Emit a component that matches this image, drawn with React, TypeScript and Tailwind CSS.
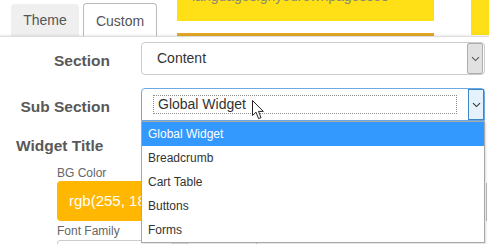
import React from "react";

const font = "font-['Liberation_Sans',Arial,sans-serif]";

function Chevron({ color = "#555" }: { color?: string }) {
  return (
    <svg width="9" height="6" viewBox="0 0 9 6">
      <path d="M1 1.2 L4.5 4.6 L8 1.2" fill="none" stroke={color} strokeWidth="1.1" />
    </svg>
  );
}

function Cursor() {
  return (
    <svg width="13" height="20" viewBox="0 0 13 20" className="absolute left-[252px] top-[100px]">
      <path
        d="M0.5 0.5 L0.5 15.5 L4 12.2 L6.6 18.6 L9 17.6 L6.5 11.4 L11.3 11.4 Z"
        fill="#fff"
        stroke="#222"
        strokeWidth="1"
        strokeLinejoin="round"
      />
    </svg>
  );
}

const items = ["Global Widget", "Breadcrumb", "Cart Table", "Buttons", "Forms"];

export default function App() {
  return (
    <div className={`${font} relative w-[489px] h-[244px] overflow-hidden bg-white`}>
      {/* tab bar */}
      <div className="flex h-[36px] items-end">
        <div className="ml-[11px] flex h-[32px] w-[68px] items-center justify-center rounded-t-[4px] bg-[#efefef] text-[14px] text-[#555]">
          Theme
        </div>
        <div className="ml-[4px] flex h-[33px] w-[74px] items-center justify-center rounded-t-[4px] border border-b-0 border-[#bbb] bg-white pt-[2px] text-[14px] text-[#555]">
          Custom
        </div>
        <div className="ml-[20px] flex h-[36px] w-[257px] flex-col self-start">
          <div className="h-[21px] overflow-hidden bg-[#ffdf16] pl-[15px]">
            <div className="-mt-[12px] text-[14px] leading-[16px] text-[#8a8a70]">languagesignyourownpagesses</div>
          </div>
          <div className="flex-1" />
          <div className="h-[3px] bg-[#e3a925]" />
        </div>
        <div className="ml-[37px] h-[35px] w-[18px] self-start bg-[#ffdf16]" />
      </div>

      {/* panel */}
      <div className="relative border-t border-[#ddd] shadow-[0_-1px_2px_rgba(0,0,0,0.08)]">
        <div className="flex flex-col pt-[5px]">
          <div className="flex items-center">
            <div className="mt-[5px] w-[110px] text-right text-[15.5px] font-bold text-[#595959]">Section</div>
            <div className="ml-[31px] flex h-[33px] w-[344px] items-center rounded-[4px] border border-[#ccc] bg-white pl-[15px] pr-[1px]">
              <span className="flex-1 text-[14px] text-[#333]">Content</span>
              <div className="flex h-[31px] w-[16px] items-center justify-center rounded-[2px] border border-[#adadad] bg-[#e1e1e1]">
                <Chevron />
              </div>
            </div>
          </div>

          <div className="mt-[13px] flex items-center">
            <div className="mt-[4px] w-[110px] text-right text-[15.5px] font-bold text-[#595959]">Sub Section</div>
            <div className="ml-[31px] flex h-[33px] w-[344px] items-center rounded-t-[4px] border border-[#6aa9e6] bg-white pl-[11px]">
              <div className="flex h-[19px] w-[304px] items-center border border-dotted border-[#8c8c8c] pl-[4px] text-[14px] text-[#333]">
                Global Widget
              </div>
              <div className="ml-auto flex h-[31px] w-[16px] items-center justify-center border border-[#3d86c6] bg-[#e5f1fb]">
                <Chevron color="#333" />
              </div>
            </div>
          </div>

          <div className="ml-[16px] mt-[16px] text-[15.5px] font-bold leading-[18px] text-[#595959]">Widget Title</div>
          <div className="ml-[57px] mt-[11px] text-[12px] leading-[14px] text-[#666]">BG Color</div>
          <div className="ml-[57px] mt-[1px] flex h-[40px] w-[200px] items-center rounded-[4px] bg-[#ffb702] pl-[12px] text-[15px] text-white">
            rgb(255, 183, 2)
          </div>
          <div className="ml-[57px] mt-[3px] text-[12px] leading-[14px] text-[#666]">Font Family</div>
          <div className="ml-[57px] mt-[2px] flex h-[20px] w-[200px] rounded-t-[3px] border border-[#ccc]">
            <div className="ml-[114px] h-full w-[16px] border-x border-[#ccc] bg-[#e6e6e6]" />
          </div>
        </div>

        <div className="absolute right-[2px] top-[146px] h-[38px] w-[1px] bg-[#bbb]" />
      </div>

      {/* open dropdown */}
      <ul className="absolute left-[141px] top-[121px] w-[344px] border border-[#a8a8a8] bg-white shadow-[1px_1px_2px_rgba(0,0,0,0.15)]">
        {items.map((it, i) => (
          <li
            key={it}
            className={`flex h-[24px] items-center pl-[6px] text-[12px] ${
              i === 0 ? "bg-[#3399ff] text-white" : "text-[#333]"
            }`}
          >
            {it}
          </li>
        ))}
      </ul>

      <Cursor />
    </div>
  );
}
